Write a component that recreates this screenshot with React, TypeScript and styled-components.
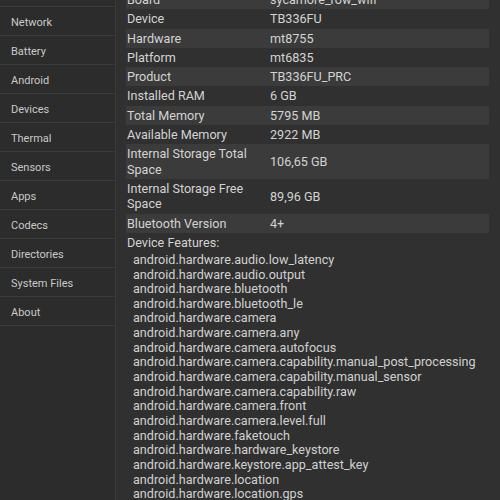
import React from 'react';
import styled, { createGlobalStyle } from 'styled-components';

const GlobalStyle = createGlobalStyle`
  html, body {
    margin: 0;
    padding: 0;
    background: #303030;
  }
  body {
    font-family: Roboto, "Noto Sans", sans-serif;
  }
`;

const Screen = styled.div`
  display: flex;
  width: 500px;
  height: 500px;
  overflow: hidden;
  background: #303030;
`;

const Sidebar = styled.nav`
  width: 115px;
  flex-shrink: 0;
  background: #2c2c2c;
  border-right: 1px solid #3a3a3a;
  overflow: hidden;
`;

const NavList = styled.ul`
  list-style: none;
  margin: -22px 0 0;
  padding: 0;
`;

const NavItem = styled.li`
  box-sizing: border-box;
  height: 29px;
  display: flex;
  align-items: center;
  padding: 2px 0 0 11px;
  border-bottom: 1px solid #3b3b3b;
  font-size: 11px;
  color: #c9c9c9;
`;

const Content = styled.main`
  flex: 1;
  padding: 0 11px 0 10px;
  overflow: hidden;
`;

const InfoTable = styled.div`
  margin-top: -10px;
  display: flex;
  flex-direction: column;
`;

const InfoRow = styled.div<{ $shaded: boolean }>`
  display: grid;
  grid-template-columns: 144px 1fr;
  align-items: center;
  padding: 2px 0;
  background: ${(p) => (p.$shaded ? '#3b3b3b' : 'transparent')};
  font-size: 12.6px;
  line-height: 15.3px;
  color: #d3d3d3;
`;

const Label = styled.span`
  padding-left: 1px;
  padding-right: 8px;
`;

const Value = styled.span``;

const FeaturesTitle = styled.div`
  margin-top: 2px;
  padding-left: 1px;
  font-size: 12.6px;
  line-height: 15px;
  color: #d3d3d3;
`;

const FeatureList = styled.ul`
  list-style: none;
  margin: 3px 0 0;
  padding-left: 7px;
`;

const Feature = styled.li`
  font-size: 12.6px;
  line-height: 14.66px;
  color: #d0d0d0;
  white-space: nowrap;
`;

const navItems = [
  'Overview',
  'Network',
  'Battery',
  'Android',
  'Devices',
  'Thermal',
  'Sensors',
  'Apps',
  'Codecs',
  'Directories',
  'System Files',
  'About',
];

const info: [string, string][] = [
  ['Board', 'sycamore_row_wifi'],
  ['Device', 'TB336FU'],
  ['Hardware', 'mt8755'],
  ['Platform', 'mt6835'],
  ['Product', 'TB336FU_PRC'],
  ['Installed RAM', '6 GB'],
  ['Total Memory', '5795 MB'],
  ['Available Memory', '2922 MB'],
  ['Internal Storage Total Space', '106,65 GB'],
  ['Internal Storage Free Space', '89,96 GB'],
  ['Bluetooth Version', '4+'],
];

const features = [
  'android.hardware.audio.low_latency',
  'android.hardware.audio.output',
  'android.hardware.bluetooth',
  'android.hardware.bluetooth_le',
  'android.hardware.camera',
  'android.hardware.camera.any',
  'android.hardware.camera.autofocus',
  'android.hardware.camera.capability.manual_post_processing',
  'android.hardware.camera.capability.manual_sensor',
  'android.hardware.camera.capability.raw',
  'android.hardware.camera.front',
  'android.hardware.camera.level.full',
  'android.hardware.faketouch',
  'android.hardware.hardware_keystore',
  'android.hardware.keystore.app_attest_key',
  'android.hardware.location',
  'android.hardware.location.gps',
  'android.hardware.location.network',
];

export default function App() {
  return (
    <>
      <GlobalStyle />
      <Screen>
        <Sidebar>
          <NavList>
            {navItems.map((item) => (
              <NavItem key={item}>{item}</NavItem>
            ))}
          </NavList>
        </Sidebar>
        <Content>
          <InfoTable>
            {info.map(([label, value], i) => (
              <InfoRow key={label} $shaded={i % 2 === 0}>
                <Label>{label}</Label>
                <Value>{value}</Value>
              </InfoRow>
            ))}
          </InfoTable>
          <FeaturesTitle>Device Features:</FeaturesTitle>
          <FeatureList>
            {features.map((f) => (
              <Feature key={f}>{f}</Feature>
            ))}
          </FeatureList>
        </Content>
      </Screen>
    </>
  );
}
